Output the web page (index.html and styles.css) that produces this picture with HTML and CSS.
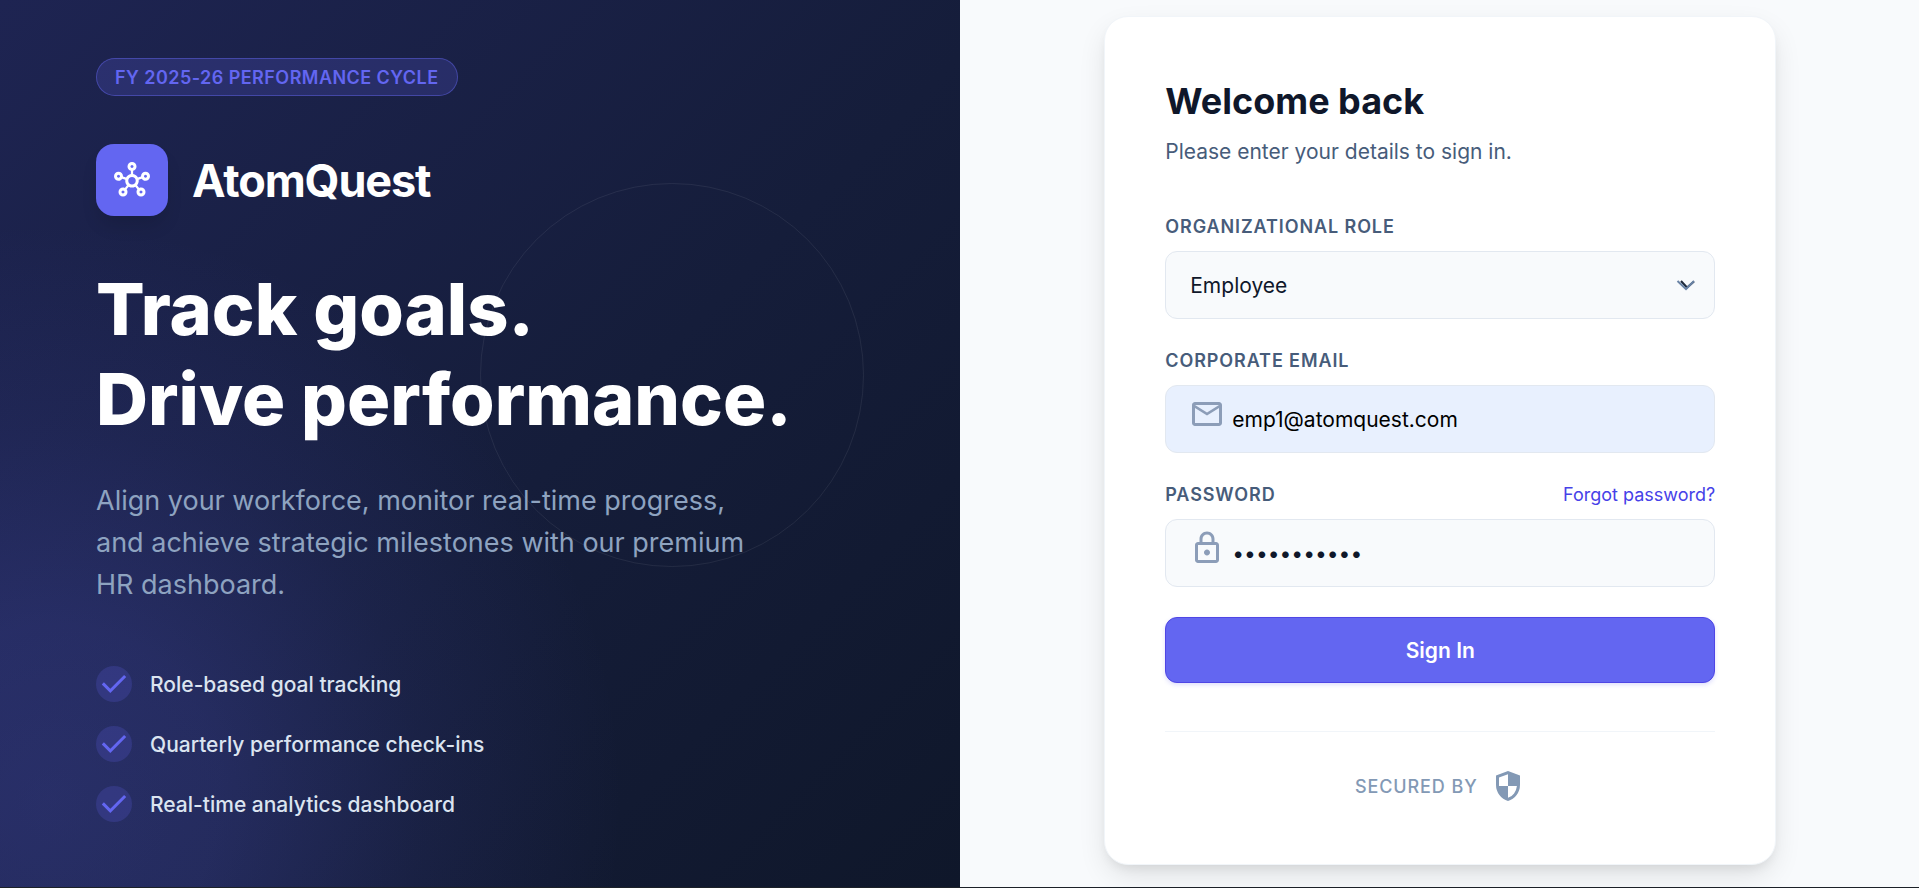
FILE: index.html
```html
<!DOCTYPE html>
<html lang="en">
<head>
<meta charset="utf-8">
<meta name="viewport" content="width=device-width, initial-scale=1">
<title>AtomQuest – Sign in</title>
<link rel="stylesheet" href="styles.css">
</head>
<body>
<main class="page">
  <section class="hero">
    <div class="hero-glow"></div>
    <div class="hero-ring"></div>
    <div class="hero-content">
      <span class="pill">FY 2025-26 PERFORMANCE CYCLE</span>
      <div class="brand">
        <span class="brand-tile">
          <svg class="icon" viewBox="0 -960 960 960" aria-hidden="true"><path d="M240-40q-50 0-85-35t-35-85q0-50 35-85t85-35q14 0 26 3t23 8l57-71q-28-31-39-70t-5-78l-81-27q-17 25-43 40t-58 15q-50 0-85-35T0-580q0-50 35-85t85-35q50 0 85 35t35 85v8l81 28q20-36 53.500-61t75.500-32v-87q-39-11-64.500-42.500T360-840q0-50 35-85t85-35q50 0 85 35t35 85q0 42-26 73.500T510-724v87q42 7 75.500 32t53.500 61l81-28v-8q0-50 35-85t85-35q50 0 85 35t35 85q0 50-35 85t-85 35q-32 0-58.500-15T739-515l-81 27q6 39-5 77.500T614-340l57 70q11-5 23-7.500t26-2.500q50 0 85 35t35 85q0 50-35 85t-85 35q-50 0-85-35t-35-85q0-20 6.500-38.500T624-232l-57-71q-41 23-87.500 23T392-303l-56 71q11 15 17.500 33.500T360-160q0 50-35 85t-85 35ZM120-540q17 0 28.500-11.500T160-580q0-17-11.500-28.500T120-620q-17 0-28.500 11.500T80-580q0 17 11.500 28.500T120-540Zm120 420q17 0 28.500-11.500T280-160q0-17-11.500-28.500T240-200q-17 0-28.500 11.500T200-160q0 17 11.500 28.500T240-120Zm240-680q17 0 28.500-11.500T520-840q0-17-11.500-28.500T480-880q-17 0-28.500 11.500T440-840q0 17 11.500 28.500T480-800Zm0 440q42 0 71-29t29-71q0-42-29-71t-71-29q-42 0-71 29t-29 71q0 42 29 71t71 29Zm240 240q17 0 28.500-11.500T760-160q0-17-11.500-28.500T720-200q-17 0-28.500 11.500T680-160q0 17 11.500 28.500T720-120Zm120-420q17 0 28.500-11.500T880-580q0-17-11.500-28.500T840-620q-17 0-28.500 11.500T800-580q0 17 11.500 28.500T840-540Z"/></svg>
        </span>
        <span class="brand-name">AtomQuest</span>
      </div>
      <h1 class="headline">Track goals.<br>Drive performance.</h1>
      <p class="lead">Align your workforce, monitor real-time progress, and achieve strategic milestones with our premium HR dashboard.</p>
      <ul class="features">
        <li class="feature"><span class="tick"><svg class="icon" viewBox="0 -960 960 960" aria-hidden="true"><path d="M382-240 154-468l57-57 171 171 367-367 57 57-424 424Z"/></svg></span>Role-based goal tracking</li>
        <li class="feature"><span class="tick"><svg class="icon" viewBox="0 -960 960 960" aria-hidden="true"><path d="M382-240 154-468l57-57 171 171 367-367 57 57-424 424Z"/></svg></span>Quarterly performance check-ins</li>
        <li class="feature"><span class="tick"><svg class="icon" viewBox="0 -960 960 960" aria-hidden="true"><path d="M382-240 154-468l57-57 171 171 367-367 57 57-424 424Z"/></svg></span>Real-time analytics dashboard</li>
      </ul>
    </div>
  </section>

  <section class="auth">
    <div class="card">
      <h2 class="card-title">Welcome back</h2>
      <p class="card-subtitle">Please enter your details to sign in.</p>
      <form class="form">
        <div class="field">
          <label class="label" for="role">ORGANIZATIONAL ROLE</label>
          <div class="control">
            <select class="input select" id="role">
              <option>Employee</option>
              <option>Manager</option>
              <option>Admin</option>
            </select>
            <svg class="chevron" viewBox="0 0 20 12" aria-hidden="true">
              <path class="chevron-dark" d="M5 2l6 6.500L18 2.500"/>
              <path class="chevron-light" d="M1.500 2L10 10l8-8"/>
            </svg>
          </div>
        </div>
        <div class="field">
          <label class="label" for="email">CORPORATE EMAIL</label>
          <div class="control">
            <svg class="icon field-icon" viewBox="0 0 24 24" aria-hidden="true"><path d="M22 6c0-1.100-.9-2-2-2H4c-1.100 0-2 .9-2 2v12c0 1.100.9 2 2 2h16c1.100 0 2-.9 2-2V6zm-2 0l-8 5-8-5h16zm0 12H4V8l8 5 8-5v10z"/></svg>
            <input class="input with-icon autofilled" id="email" type="email" value="emp1@atomquest.com">
          </div>
        </div>
        <div class="field">
          <div class="label-row">
            <label class="label" for="password">PASSWORD</label>
            <a class="forgot" href="#">Forgot password?</a>
          </div>
          <div class="control">
            <svg class="icon field-icon" viewBox="0 0 24 24" aria-hidden="true"><path d="M18 8h-1V6c0-2.760-2.240-5-5-5S7 3.240 7 6v2H6c-1.100 0-2 .9-2 2v10c0 1.100.9 2 2 2h12c1.100 0 2-.9 2-2V10c0-1.100-.9-2-2-2zM9 6c0-1.660 1.340-3 3-3s3 1.340 3 3v2H9V6zm9 14H6V10h12v10zm-6-3c1.100 0 2-.9 2-2s-.9-2-2-2-2 .9-2 2 .9 2 2 2z"/></svg>
            <input class="input with-icon" id="password" type="password" value="employee123">
          </div>
        </div>
        <button class="submit" type="submit">Sign In</button>
      </form>
      <div class="secured">
        <span>SECURED BY</span>
        <svg class="icon" viewBox="0 -960 960 960" aria-hidden="true"><path d="M480-80q-139-35-229.500-159.500T160-516v-244l320-120 320 120v244q0 152-90.500 276.500T480-80Zm0-84q97-30 162-118.500T718-480H480v-315l-240 90v207q0 7 2 18h238v316Z"/></svg>
      </div>
    </div>
  </section>
</main>
</body>
</html>
```
FILE: styles.css
```css
*, *::before, *::after { box-sizing: border-box; }

body {
  margin: 0;
  font-family: Inter, "Liberation Sans", sans-serif;
  color: #0f172a;
  background: #f8fafc;
}

h1, h2, p, ul { margin: 0; padding: 0; }

.icon {
  display: block;
  flex: none;
  width: 36px;
  height: 36px;
  fill: currentColor;
}

.page {
  display: grid;
  grid-template-columns: 1fr 1fr;
  min-height: 100vh;
  border-bottom: 1px solid #1c2128;
}

/* Left side */
.hero {
  position: relative;
  overflow: hidden;
  display: flex;
  align-items: center;
  padding: 24px 96px 31px;
  background: linear-gradient(135deg, #1e2452 0%, #151d3a 55%, #0f172a 100%);
}

.hero-glow {
  position: absolute;
  left: -55%;
  bottom: -55%;
  width: 120%;
  aspect-ratio: 1;
  border-radius: 50%;
  background: radial-gradient(circle closest-side, rgba(99, 102, 241, 0.23) 0%, rgba(99, 102, 241, 0.2) 30%, rgba(99, 102, 241, 0.08) 65%, rgba(99, 102, 241, 0) 100%);
}

.hero-ring {
  position: absolute;
  top: 183px;
  right: 10%;
  width: 40%;
  aspect-ratio: 1;
  border: 1px solid rgba(255, 255, 255, 0.07);
  border-radius: 50%;
}

.hero-content { position: relative; }

.pill {
  display: inline-flex;
  align-items: center;
  height: 38px;
  padding: 0 18px;
  border: 1px solid rgba(99, 102, 241, 0.45);
  border-radius: 19px;
  background: rgba(99, 102, 241, 0.2);
  color: #6366f1;
  font-size: 18px;
  font-weight: 600;
  letter-spacing: 0.025em;
}

.brand {
  display: flex;
  align-items: center;
  gap: 24px;
  margin-top: 48px;
}

.brand-tile {
  display: grid;
  place-items: center;
  width: 72px;
  height: 72px;
  border-radius: 18px;
  background: #6366f1;
  color: #fff;
  box-shadow: 0 12px 18px -3px rgba(0, 0, 0, 0.12);
}

.brand-name {
  color: #fff;
  font-size: 45px;
  font-weight: 700;
  letter-spacing: -0.025em;
}

.headline {
  margin-top: 48px;
  color: #fff;
  font-size: 72px;
  font-weight: 800;
  line-height: 90px;
}

.lead {
  max-width: 672px;
  margin-top: 36px;
  color: #8ea3c0;
  font-size: 27px;
  font-weight: 400;
  line-height: 42px;
}

.features {
  display: grid;
  gap: 24px;
  margin-top: 60px;
  list-style: none;
}

.feature {
  display: flex;
  align-items: center;
  gap: 18px;
  color: #dbe4f0;
  font-size: 21px;
  font-weight: 500;
}

.tick {
  border-radius: 50%;
  background: rgba(99, 102, 241, 0.2);
  color: #6366f1;
}

/* Right side */
.auth {
  display: flex;
  align-items: center;
  justify-content: center;
  padding: 16px 24px 22px 26px;
}

.card {
  width: 100%;
  max-width: 672px;
  padding: 60px;
  border: 1px solid #f1f5f9;
  border-radius: 24px;
  background: #fff;
  box-shadow: 0 12px 30px -4px rgba(0, 0, 0, 0.12), 0 6px 12px -4px rgba(0, 0, 0, 0.08);
}

.card-title {
  font-size: 36px;
  font-weight: 700;
  line-height: 48px;
}

.card-subtitle {
  margin-top: 12px;
  color: #475c7a;
  font-size: 21px;
  line-height: 30px;
}

.form {
  display: grid;
  gap: 30px;
  margin-top: 48px;
}

.field {
  display: grid;
  gap: 12px;
}

.label-row {
  display: flex;
  justify-content: space-between;
}

.label {
  color: #475c7a;
  font-size: 18px;
  font-weight: 600;
  line-height: 24px;
  letter-spacing: 0.05em;
}

.forgot {
  color: #4641e8;
  font-size: 18px;
  line-height: 24px;
  text-decoration: none;
}

.control { position: relative; }

.input {
  display: block;
  width: 100%;
  height: 68px;
  padding: 0 24px;
  border: 1px solid #e2e8f0;
  border-radius: 12px;
  background: #f8fafc;
  color: #0f172a;
  font: inherit;
  font-size: 21px;
}

.select { appearance: none; }
.with-icon { padding-left: 66px; }
.autofilled { background: #e8f0fe; color: #000; }

.field-icon {
  position: absolute;
  top: 11px;
  left: 24px;
  color: #8c9db8;
}

.chevron {
  position: absolute;
  top: 28px;
  right: 19px;
  width: 20px;
  height: 12px;
  fill: none;
  stroke-width: 2;
  pointer-events: none;
}

.chevron-dark { stroke: #1e293b; }
.chevron-light { stroke: #6b84a6; }

.submit {
  height: 66px;
  border: 1px solid #4f46e5;
  border-radius: 12px;
  background: #6366f1;
  color: #fff;
  font: inherit;
  font-size: 21px;
  font-weight: 600;
  box-shadow: 0 2px 4px rgba(99, 102, 241, 0.2);
}

.secured {
  display: flex;
  align-items: center;
  justify-content: center;
  gap: 12px;
  margin-top: 48px;
  padding-top: 36px;
  border-top: 1px solid #f1f5f9;
  color: #8399b5;
  font-size: 18px;
  font-weight: 500;
  letter-spacing: 0.05em;
}
```
